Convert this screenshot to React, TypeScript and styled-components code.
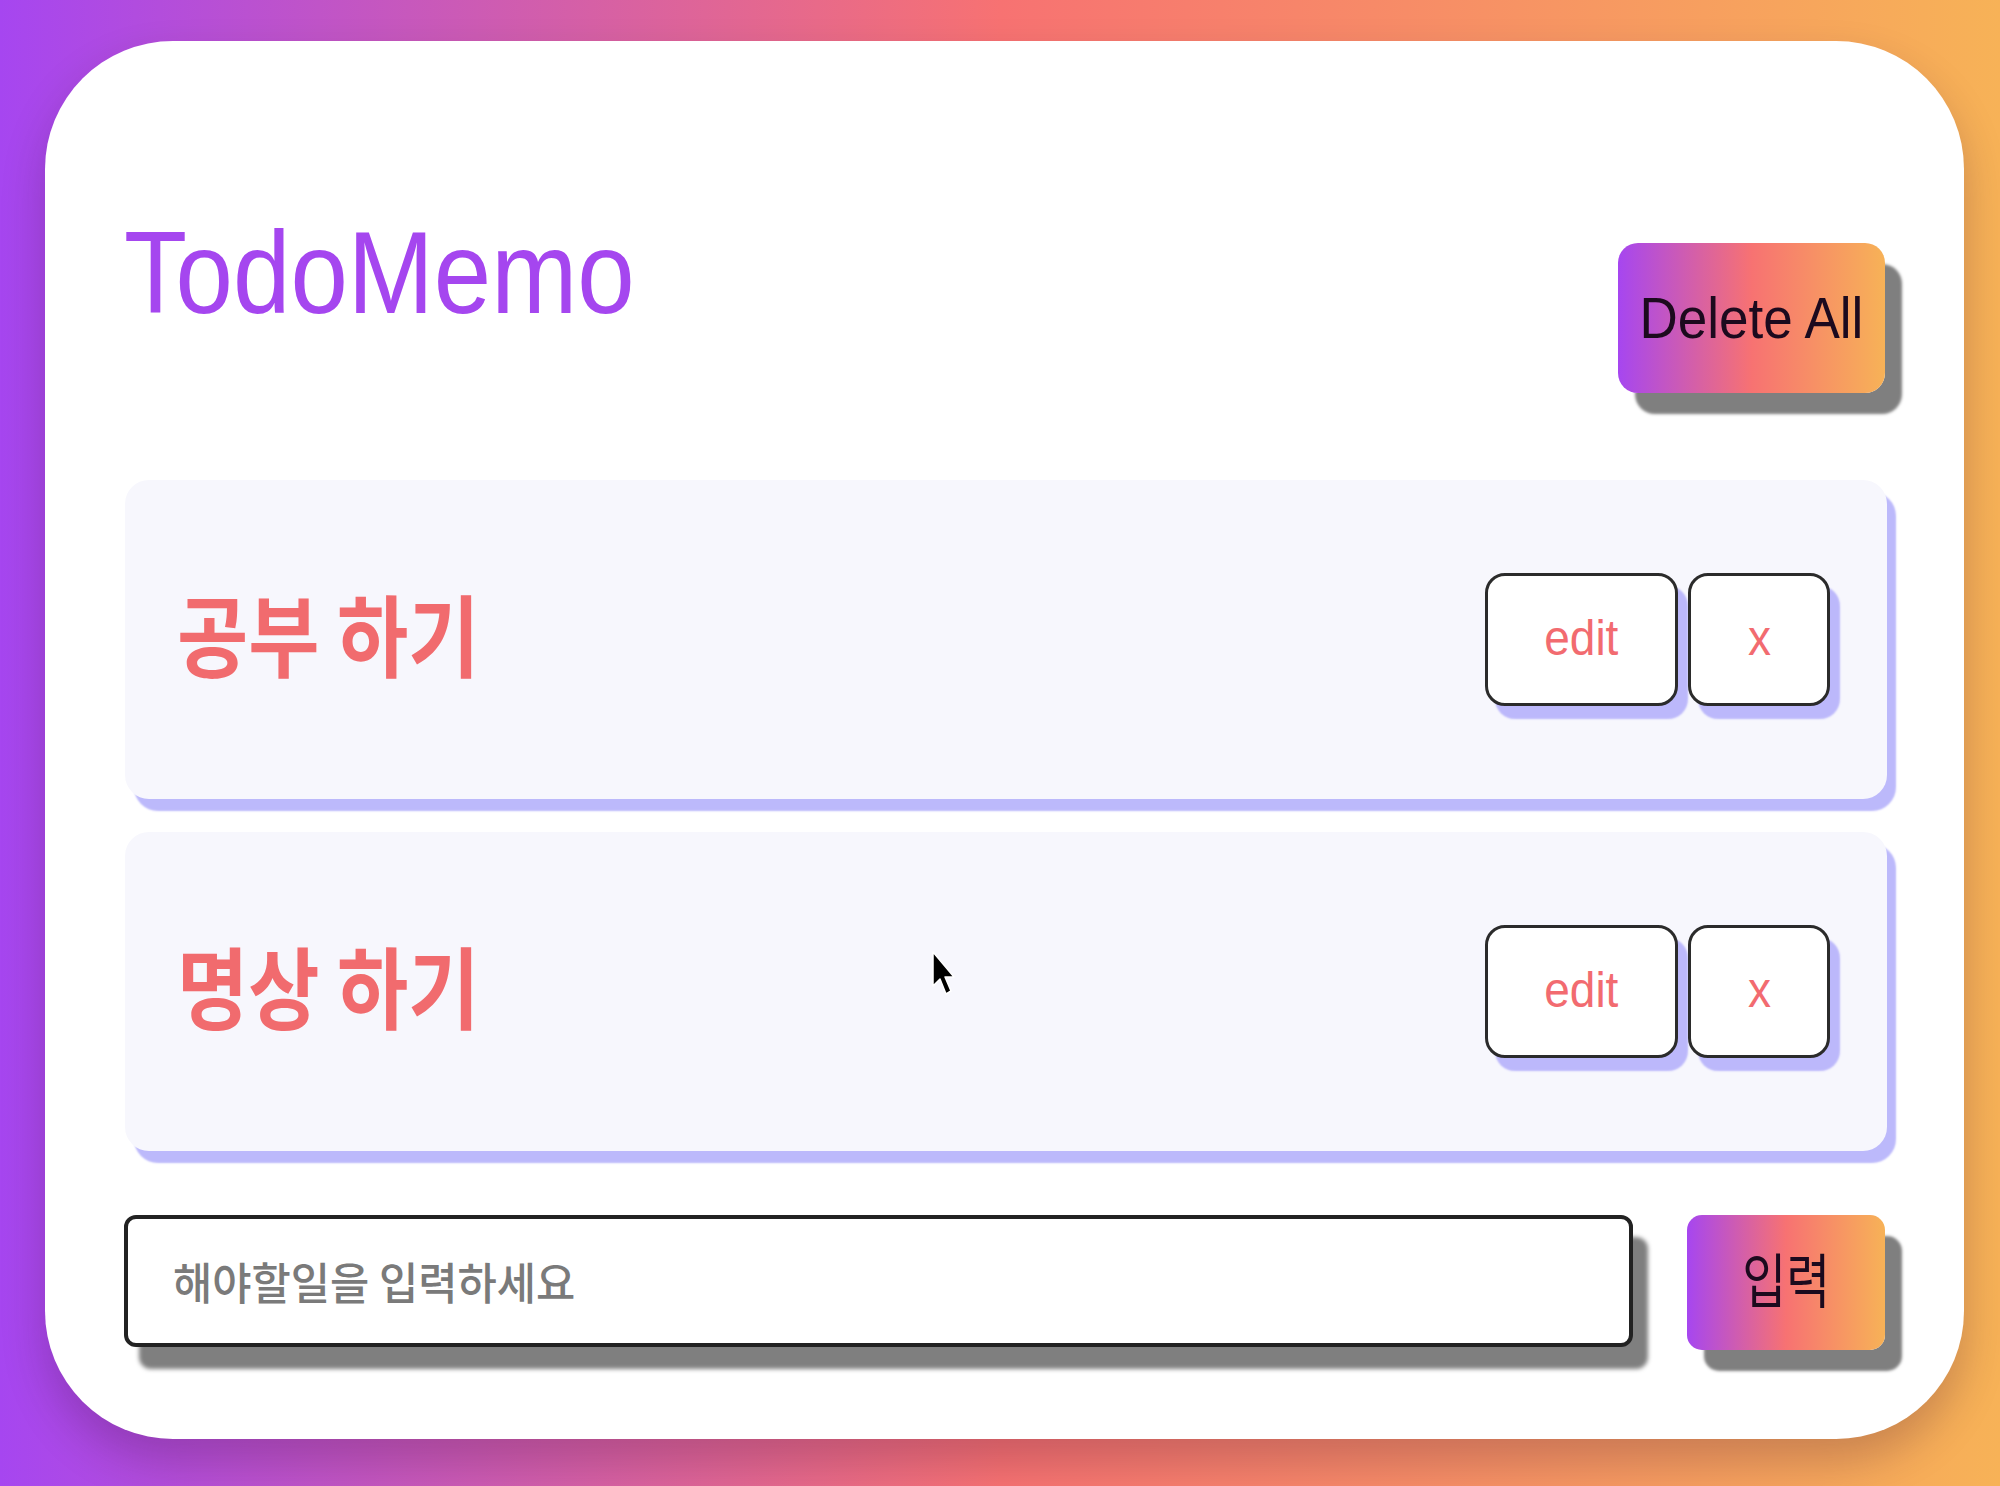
import React, { useState } from "react";
import styled, { createGlobalStyle } from "styled-components";

const GlobalStyle = createGlobalStyle`
  html, body { margin: 0; padding: 0; }
  body {
    width: 2000px;
    height: 1486px;
    overflow: hidden;
    font-family: "Liberation Sans", Arial, "Noto Sans CJK KR", sans-serif;
  }
  * { box-sizing: border-box; }
`;

const BRAND = "linear-gradient(90deg, #a646f0 0%, #f77272 50%, #f7b257 100%)";
const LATIN = `"Liberation Sans", Arial, "Noto Sans CJK KR", sans-serif`;
const KOREAN = `"Noto Sans CJK KR", "Liberation Sans", sans-serif`;

const Page = styled.div`
  position: relative;
  width: 2000px;
  height: 1486px;
  padding: 41px 36px 47px 45px;
  background: ${BRAND};
`;

const Card = styled.main`
  height: 100%;
  background: #ffffff;
  border-radius: 128px;
  box-shadow: 0 22px 44px rgba(40, 0, 40, 0.22);
  padding: 174px 79px 0 79px;
  display: flex;
  flex-direction: column;
`;

const Squeeze = styled.span<{ $sx: number; $origin?: string }>`
  display: inline-block;
  white-space: nowrap;
  transform: scaleX(${(p) => p.$sx});
  transform-origin: ${(p) => p.$origin ?? "center"};
`;

const Header = styled.header`
  display: flex;
  justify-content: space-between;
  align-items: flex-start;
  height: 178px;
`;

const Title = styled.h1`
  margin: 0;
  font-family: ${LATIN};
  font-weight: 400;
  font-size: 116px;
  line-height: 1;
  color: #a546ef;
`;

const GradientButton = styled.button<{ $w: number; $h: number; $r: number; $size: number; $font: string }>`
  width: ${(p) => p.$w}px;
  height: ${(p) => p.$h}px;
  border: none;
  border-radius: ${(p) => p.$r}px;
  background: ${BRAND};
  box-shadow: 17px 21px 3px rgba(0, 0, 0, 0.5);
  color: #1c0a1e;
  font-family: ${(p) => p.$font};
  font-size: ${(p) => p.$size}px;
  font-weight: 400;
  display: flex;
  align-items: center;
  justify-content: center;
  padding: 0;
  cursor: pointer;
  flex-shrink: 0;
`;

const DeleteAll = styled(GradientButton)`
  margin-top: 28px;
`;

const SubmitLabel = styled.span`
  line-height: 1;
  margin-top: -10px;
`;

const List = styled.ul`
  list-style: none;
  margin: 87px -2px 0 1px;
  padding: 0;
  display: flex;
  flex-direction: column;
  gap: 33px;
`;

const Item = styled.li`
  height: 319px;
  background: #f7f7fd;
  border-radius: 24px;
  box-shadow: 9px 12px 2px #bcb9fb;
  display: flex;
  align-items: center;
  justify-content: space-between;
  padding: 0 57px 0 52px;
`;

const ItemText = styled.span`
  font-family: ${KOREAN};
  font-weight: 700;
  font-size: 89px;
  line-height: 1;
  color: #f16b6e;
  margin-top: -17px;
`;

const Actions = styled.div`
  display: flex;
  gap: 10px;
`;

const OutlineButton = styled.button<{ $w: number }>`
  width: ${(p) => p.$w}px;
  height: 133px;
  background: #ffffff;
  border: 3px solid #2b2b2b;
  border-radius: 20px;
  box-shadow: 10px 13px 2px #bcb8fb;
  color: #f26b70;
  font-family: ${LATIN};
  font-size: 50px;
  display: flex;
  align-items: center;
  justify-content: center;
  padding: 0 0 4px;
  cursor: pointer;
`;

const InputRow = styled.form`
  margin-top: 64px;
  display: flex;
  align-items: flex-start;
  gap: 54px;
`;

const Field = styled.label`
  position: relative;
  flex: 1;
  height: 132px;
  border: 4px solid #222222;
  border-radius: 12px;
  background: #ffffff;
  box-shadow: 15px 22px 4px rgba(0, 0, 0, 0.5);
  display: flex;
  align-items: center;
`;

const TextInput = styled.input`
  width: 100%;
  height: 100%;
  border: none;
  outline: none;
  background: transparent;
  padding: 0 45px;
  font-family: ${KOREAN};
  font-size: 44px;
  border-radius: 8px;
`;

const Placeholder = styled.span`
  position: absolute;
  left: 45px;
  top: 50%;
  transform: translateY(-50%);
  pointer-events: none;
  font-family: ${KOREAN};
  font-size: 44px;
  line-height: 1;
  color: #7a7a7a;
  font-weight: 500;
`;

const Pointer = styled.svg`
  position: absolute;
  left: 930px;
  top: 950px;
  pointer-events: none;
`;

const todos = ["공부 하기", "명상 하기"];

export default function App() {
  const [value, setValue] = useState("");
  return (
    <>
      <GlobalStyle />
      <Page>
        <Card>
          <Header>
            <Title>
              <Squeeze $sx={0.89} $origin="left">TodoMemo</Squeeze>
            </Title>
            <DeleteAll type="button" $w={267} $h={150} $r={20} $size={57} $font={LATIN}>
              <Squeeze $sx={0.93}>Delete All</Squeeze>
            </DeleteAll>
          </Header>
          <List>
            {todos.map((t) => (
              <Item key={t}>
                <ItemText>
                  <Squeeze $sx={0.87} $origin="left">{t}</Squeeze>
                </ItemText>
                <Actions>
                  <OutlineButton type="button" $w={193}>
                    <Squeeze $sx={0.92}>edit</Squeeze>
                  </OutlineButton>
                  <OutlineButton type="button" $w={142}>
                    <Squeeze $sx={0.92}>x</Squeeze>
                  </OutlineButton>
                </Actions>
              </Item>
            ))}
          </List>
          <InputRow onSubmit={(e) => e.preventDefault()}>
            <Field>
              <TextInput value={value} onChange={(e) => setValue(e.target.value)} aria-label="해야할일을 입력하세요" />
              {value === "" && (
                <Placeholder>
                  <Squeeze $sx={0.97} $origin="left">해야할일을 입력하세요</Squeeze>
                </Placeholder>
              )}
            </Field>
            <GradientButton type="submit" $w={198} $h={135} $r={15} $size={59} $font={KOREAN}>
              <SubmitLabel>
                <Squeeze $sx={0.81}>입력</Squeeze>
              </SubmitLabel>
            </GradientButton>
          </InputRow>
        </Card>
        <Pointer width="26" height="46" viewBox="0 0 26 46">
          <path d="M3 2 L3 36 L10 29 L16 44 L21 41 L15 27 L24 27 Z" fill="#000" stroke="#fff" strokeWidth="1.5" strokeLinejoin="round" />
        </Pointer>
      </Page>
    </>
  );
}
